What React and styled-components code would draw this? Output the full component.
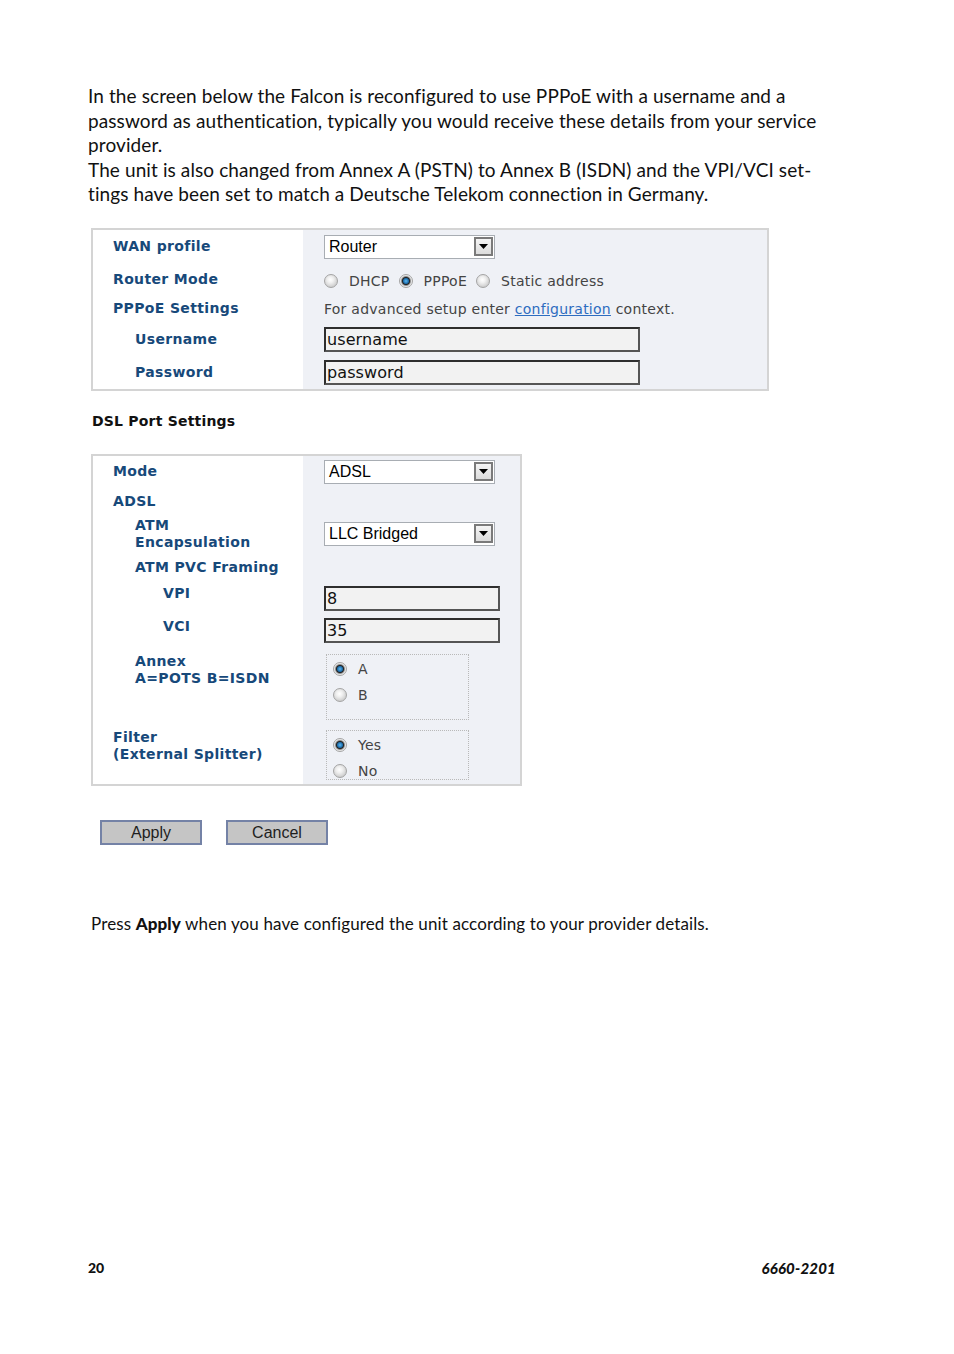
import React from 'react'
import styled, { createGlobalStyle } from 'styled-components'

const Global = createGlobalStyle`
    html, body {
        margin: 0;
        padding: 0;
        background: #ffffff;
    }
`

const indents = [20, 42, 70]

const Page = styled.div`
    width: 954px;
    height: 1354px;
    box-sizing: border-box;
    padding: 84px 118px 76px 88px;
    display: flex;
    flex-direction: column;
    font-family: 'Lato', 'Liberation Sans', sans-serif;
    color: #111;
`
const Intro = styled.p`
    margin: 0;
    font-size: 19px;
    letter-spacing: 0.1px;
    line-height: 24.5px;
`
const Panel = styled.div`
    margin: ${(p) => p.top}px 0 0 3px;
    width: ${(p) => p.w}px;
    border: 2px solid #d4d4d4;
    display: flex;
    flex-direction: column;
`
const Row = styled.div`
    display: grid;
    grid-template-columns: 210px 1fr;
    height: ${(p) => p.h}px;
`
const LabelCell = styled.div`
    background: #ffffff;
    display: flex;
    flex-direction: column;
    justify-content: ${(p) => (p.pad != null ? 'flex-start' : 'center')};
    padding-top: ${(p) => p.pad || 0}px;
    padding-left: ${(p) => indents[p.indent || 0]}px;
    font-family: 'DejaVu Sans', Verdana, sans-serif;
    font-weight: bold;
    font-size: 14px;
    letter-spacing: 0.35px;
    line-height: 17px;
    color: #17497a;
`
const FieldCell = styled.div`
    background: #eff1f6;
    display: flex;
    align-items: center;
    padding-left: 21px;
    font-family: 'DejaVu Sans', Verdana, sans-serif;
    font-size: 14px;
    letter-spacing: 0.25px;
    color: #444;
`
const Select = styled.div`
    width: ${(p) => p.w}px;
    height: 24px;
    box-sizing: border-box;
    border: 1px solid #a8adb3;
    background: #fff;
    display: flex;
    align-items: center;
    justify-content: space-between;
    padding: 0 1px 0 4px;
    font-family: 'Liberation Sans', Arial, sans-serif;
    font-size: 16px;
    letter-spacing: 0;
    color: #000;
`
const DropBtn = styled.span`
    width: 19px;
    height: 19px;
    box-sizing: border-box;
    border: 2px solid #7a7a7a;
    background: linear-gradient(#f4f4f4, #dcdcdc);
    display: flex;
    align-items: center;
    justify-content: center;
`
const TextInput = styled.div`
    width: ${(p) => p.w}px;
    height: 25px;
    box-sizing: border-box;
    border: 2px solid #2e2e2e;
    border-right-color: #555;
    border-bottom-color: #555;
    background: #f2f2f2;
    display: flex;
    align-items: center;
    padding-left: 1px;
    font-family: 'DejaVu Sans', Verdana, sans-serif;
    font-size: 16px;
    letter-spacing: 0.1px;
    color: #111;
`
const RadioLine = styled.div`
    display: flex;
    align-items: center;
    gap: 9px;
    padding-top: 3px;
`
const RadioItem = styled.label`
    display: flex;
    align-items: center;
    gap: 11px;
`
const Radio = styled.span`
    width: 14px;
    height: 14px;
    box-sizing: border-box;
    border-radius: 50%;
    border: 1px solid #a4a4a4;
    background: ${(p) =>
        p.checked
            ? 'radial-gradient(circle, #5cb8ef 0, #1e6fae 2.5px, #222 3.6px, #9a9a9a 4.6px, #e6e6e6 5.4px, #f6f6f6 7px)'
            : 'radial-gradient(circle at 45% 40%, #ffffff 0, #f0f0f0 3px, #cfcfcf 7px)'};
`
const Note = styled.span`
    color: #444;
    a {
        color: #2d6cc0;
        text-decoration: underline;
    }
`
const Group = styled.div`
    width: 143px;
    height: ${(p) => p.h}px;
    box-sizing: border-box;
    margin-left: 2px;
    border: 1px dotted #b9b9b9;
    padding: 6px 0 0 6px;
    display: flex;
    flex-direction: column;
    gap: 10px;
    font-size: 14px;
`
const Heading = styled.div`
    margin: 22px 0 0 4px;
    font-family: 'DejaVu Sans', Verdana, sans-serif;
    font-weight: bold;
    font-size: 14px;
    letter-spacing: 0.2px;
    line-height: 17px;
    color: #111;
`
const Buttons = styled.div`
    display: flex;
    gap: 24px;
    margin: 34px 0 0 12px;
`
const Button = styled.button`
    width: 102px;
    height: 25px;
    padding: 0;
    border: 2px solid #7482a6;
    background: #c5c5c5;
    font-family: 'Liberation Sans', Arial, sans-serif;
    font-size: 16px;
    line-height: 22px;
    color: #1e1e1e;
`
const Outro = styled.p`
    margin: 67px 0 0 3px;
    font-size: 17px;
    letter-spacing: 0.12px;
    line-height: 24px;
    b {
        font-weight: 900;
    }
`
const Footer = styled.div`
    margin-top: auto;
    display: flex;
    justify-content: space-between;
    font-size: 14px;
    line-height: 20px;
    font-weight: 900;
    i {
        font-style: italic;
        font-size: 15px;
        letter-spacing: 0.2px;
    }
`

const Arrow = () => (
    <svg width="9" height="5" viewBox="0 0 9 5">
        <polygon points="0,0 9,0 4.5,5" fill="#000" />
    </svg>
)

const Dropdown = ({ value, w = 171 }) => (
    <Select w={w}>
        {value}
        <DropBtn>
            <Arrow />
        </DropBtn>
    </Select>
)

const Choice = ({ checked, children }) => (
    <RadioItem>
        <Radio checked={checked} />
        {children}
    </RadioItem>
)

const App = () => {
    return (
        <Page>
            <Global />
            <Intro>
                In the screen below the Falcon is reconfigured to use PPPoE with a username and a<br />
                password as authentication, typically you would receive these details from your service<br />
                provider.<br />
                The unit is also changed from Annex A (PSTN) to Annex B (ISDN) and the VPI/VCI set-<br />
                tings have been set to match a Deutsche Telekom connection in Germany.
            </Intro>

            <Panel top={21} w={674}>
                <Row h={34}>
                    <LabelCell>WAN profile</LabelCell>
                    <FieldCell><Dropdown value="Router" /></FieldCell>
                </Row>
                <Row h={31}>
                    <LabelCell>Router Mode</LabelCell>
                    <FieldCell>
                        <RadioLine>
                            <Choice>DHCP</Choice>
                            <Choice checked>PPPoE</Choice>
                            <Choice>Static address</Choice>
                        </RadioLine>
                    </FieldCell>
                </Row>
                <Row h={28}>
                    <LabelCell>PPPoE Settings</LabelCell>
                    <FieldCell>
                        <Note>For advanced setup enter <a>configuration</a> context.</Note>
                    </FieldCell>
                </Row>
                <Row h={33}>
                    <LabelCell indent={1}>Username</LabelCell>
                    <FieldCell><TextInput w={316}>username</TextInput></FieldCell>
                </Row>
                <Row h={33}>
                    <LabelCell indent={1}>Password</LabelCell>
                    <FieldCell><TextInput w={316}>password</TextInput></FieldCell>
                </Row>
            </Panel>

            <Heading>DSL Port Settings</Heading>

            <Panel top={24} w={427}>
                <Row h={32}>
                    <LabelCell>Mode</LabelCell>
                    <FieldCell><Dropdown value="ADSL" /></FieldCell>
                </Row>
                <Row h={28}>
                    <LabelCell>ADSL</LabelCell>
                    <FieldCell />
                </Row>
                <Row h={36}>
                    <LabelCell indent={1}>ATM<span>Encapsulation</span></LabelCell>
                    <FieldCell><Dropdown value="LLC Bridged" /></FieldCell>
                </Row>
                <Row h={32}>
                    <LabelCell indent={1}>ATM PVC Framing</LabelCell>
                    <FieldCell />
                </Row>
                <Row h={30}>
                    <LabelCell indent={2} pad={1}>VPI</LabelCell>
                    <FieldCell><TextInput w={176}>8</TextInput></FieldCell>
                </Row>
                <Row h={34}>
                    <LabelCell indent={2} pad={4}>VCI</LabelCell>
                    <FieldCell><TextInput w={176}>35</TextInput></FieldCell>
                </Row>
                <Row h={78}>
                    <LabelCell indent={1} pad={5}>Annex<span>A=POTS B=ISDN</span></LabelCell>
                    <FieldCell>
                        <Group h={66}>
                            <Choice checked>A</Choice>
                            <Choice>B</Choice>
                        </Group>
                    </FieldCell>
                </Row>
                <Row h={58}>
                    <LabelCell pad={3}>Filter<span>(External Splitter)</span></LabelCell>
                    <FieldCell>
                        <Group h={50}>
                            <Choice checked>Yes</Choice>
                            <Choice>No</Choice>
                        </Group>
                    </FieldCell>
                </Row>
            </Panel>

            <Buttons>
                <Button>Apply</Button>
                <Button>Cancel</Button>
            </Buttons>

            <Outro>
                Press <b>Apply</b> when you have configured the unit according to your provider details.
            </Outro>

            <Footer>
                <span>20</span>
                <i>6660-2201</i>
            </Footer>
        </Page>
    )
}

export default App
